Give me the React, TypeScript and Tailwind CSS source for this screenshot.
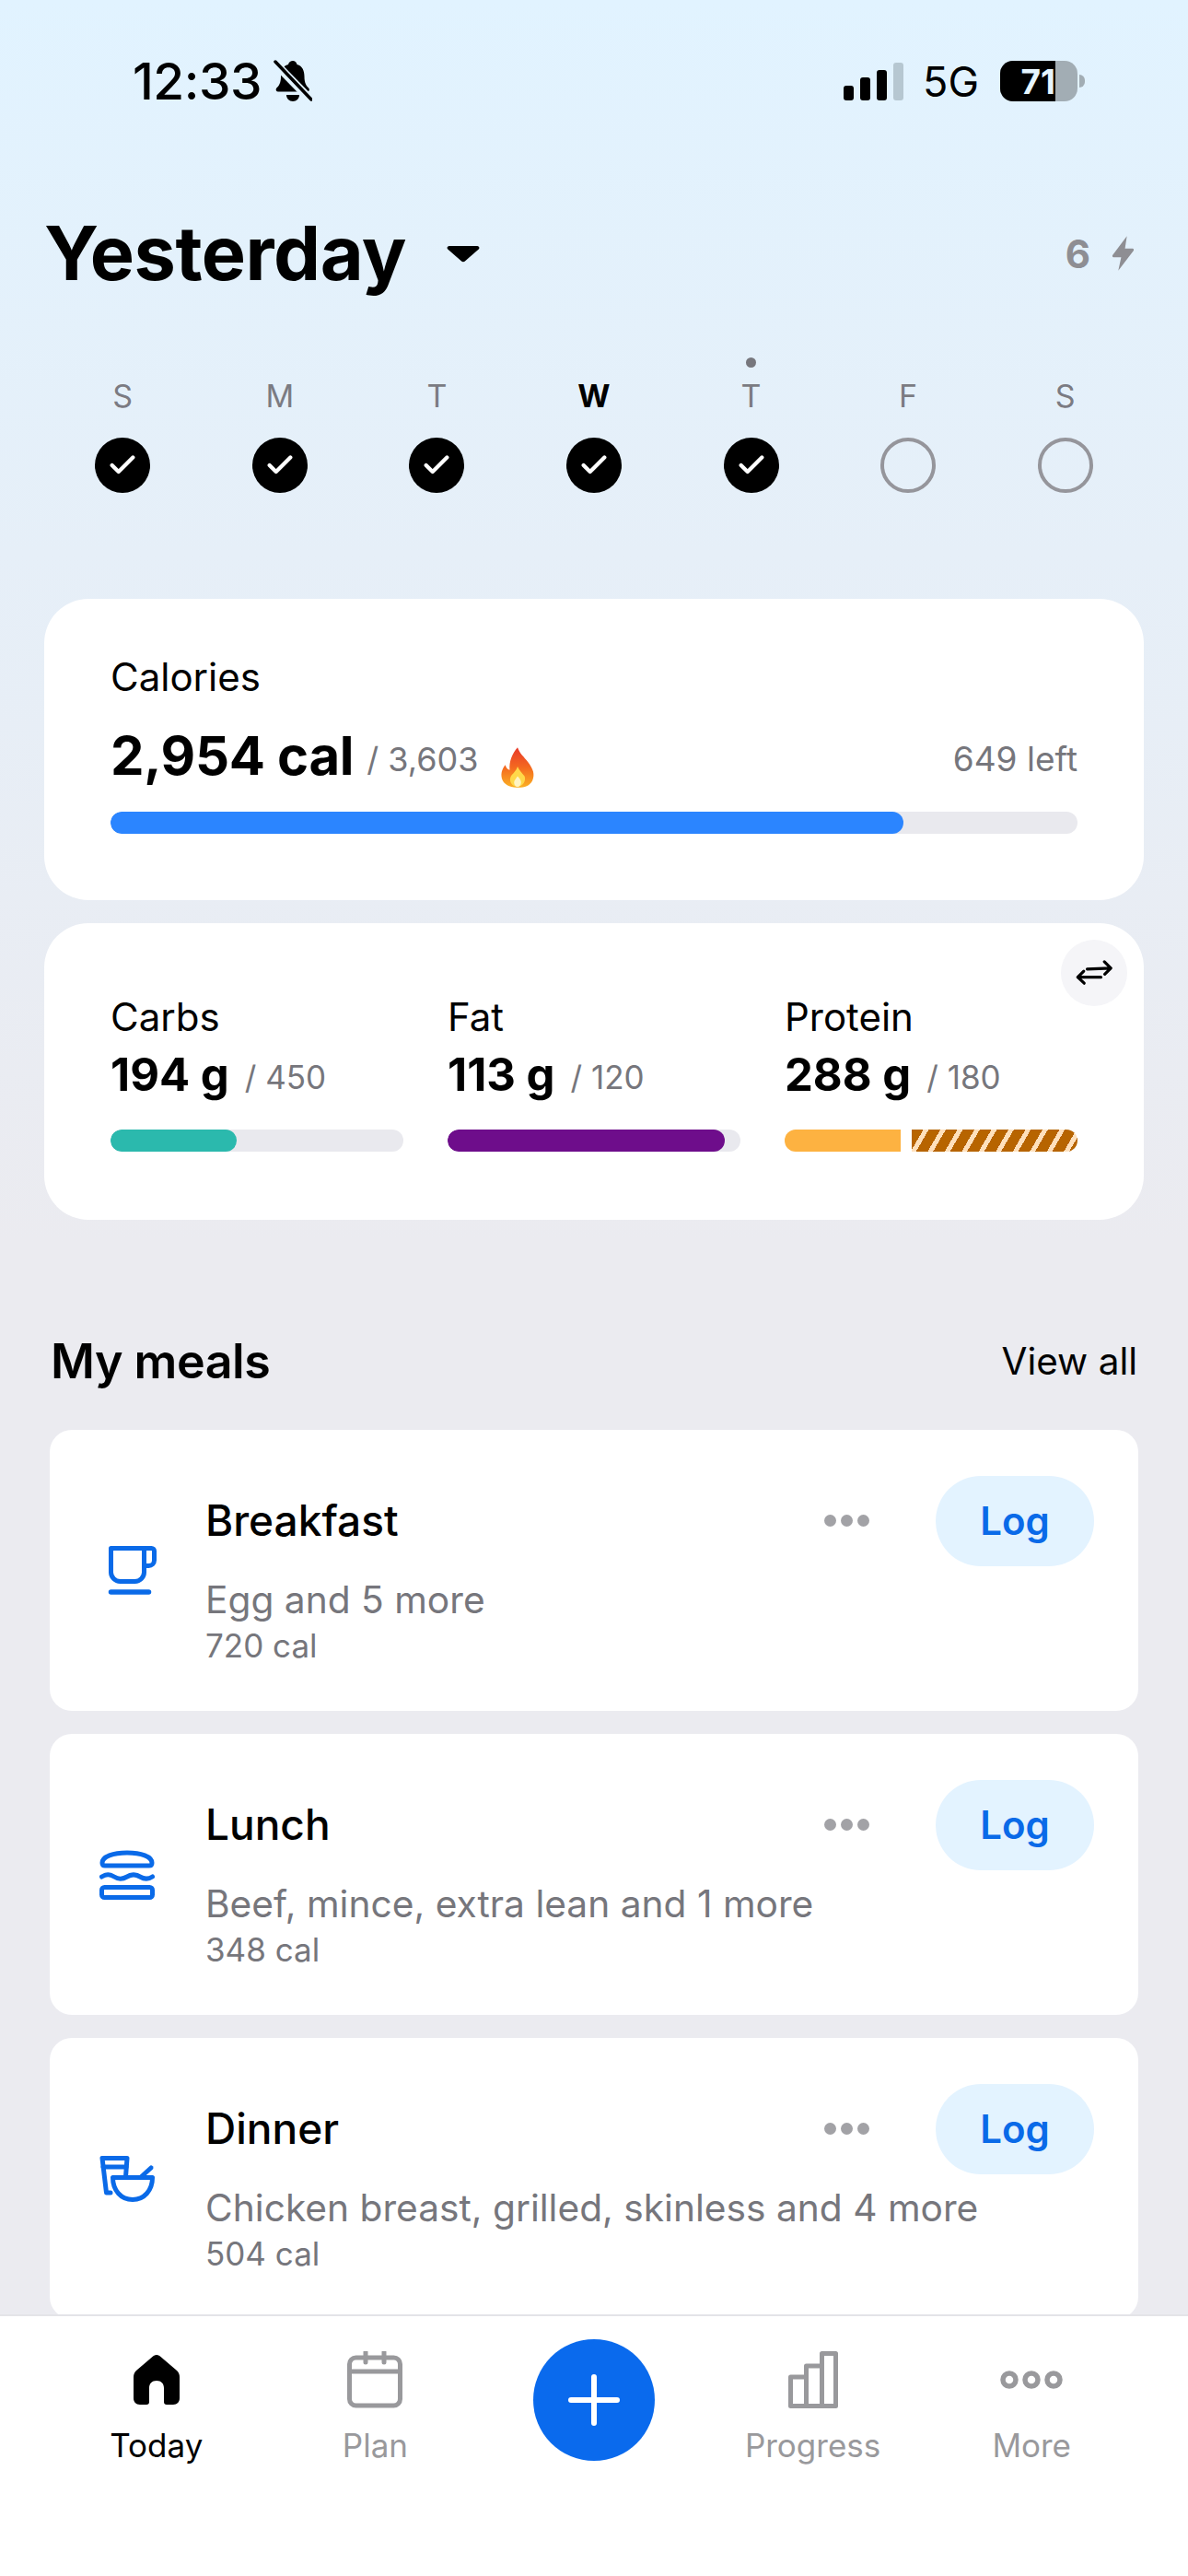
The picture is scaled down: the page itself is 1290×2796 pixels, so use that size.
import React from "react";
import { Check } from "lucide-react";

const days = ["S", "M", "T", "W", "T", "F", "S"];

const CupIcon = () => (
  <svg viewBox="0 0 60 60" className="w-[60px] h-[60px] overflow-visible" fill="none" stroke="#0a6ae8" strokeWidth="5" strokeLinecap="round" strokeLinejoin="round">
    <path d="M12.5 8.5a3 3 0 0 1 3-3h41a3 3 0 0 1 3 3v10a6 6 0 0 1-6 6h-4.500" />
    <path d="M12.500 5.500h36v26a10 10 0 0 1-10 10h-16a10 10 0 0 1-10-10z" />
    <path d="M12.500 53h41" strokeWidth="5.500" />
  </svg>
);

const BurgerIcon = () => (
  <svg viewBox="0 0 60 60" className="w-[60px] h-[60px]" fill="none" stroke="#0a6ae8" strokeWidth="5" strokeLinecap="round" strokeLinejoin="round">
    <path d="M3 17c0-7 12-11 27-11s27 4 27 11c0 2-1 3-3 3H6c-2 0-3-1-3-3z" />
    <path d="M2.500 32c4.500-3 9-3 13.500 0s9 3 14 0 9-3 14 0 9 3 13.500 0" />
    <rect x="2.500" y="43.500" width="55" height="11" rx="3" />
  </svg>
);

const BowlIcon = () => (
  <svg viewBox="0 0 60 60" className="w-[60px] h-[60px]" fill="none" stroke="#0a6ae8" strokeWidth="5" strokeLinecap="round" strokeLinejoin="round">
    <path d="M12 45H7.500L3 7.500h27l-1.500 20" />
    <path d="M4 17h25" />
    <path d="M14.500 28.500h43c0 14-9 24-21.500 24s-21.500-10-21.500-24z" />
    <path d="M56 18L45 28" />
  </svg>
);

const meals = [
  { name: "Breakfast", items: "Egg and 5 more", cal: "720 cal", icon: <CupIcon /> },
  { name: "Lunch", items: "Beef, mince, extra lean and 1 more", cal: "348 cal", icon: <BurgerIcon /> },
  { name: "Dinner", items: "Chicken breast, grilled, skinless and 4 more", cal: "504 cal", icon: <BowlIcon /> },
];

const StatusBar = () => (
  <div className="flex items-center justify-between h-[48px] pl-[144px] pr-[112px] text-black">
    <div className="flex items-center gap-[13px]">
      <span className="text-[55px] leading-none font-medium tracking-[-0.5px]">12:33</span>
      <svg viewBox="0 0 42 46" className="w-[42px] h-[46px]">
        <path d="M21 1c2 0 4 1.500 4.500 4 6 1.500 8 7 8 13 0 7 2 10 5 13 1 1.500 0 3.500-2 3.500H5c-2 0-3-2-2-3.500 3-3 5-6 5-13 0-6 2-11.500 8-13C16.500 2.500 19 1 21 1z" fill="#000" />
        <path d="M14 38h14c0 4-3 7-7 7s-7-3-7-7z" fill="#000" />
        <path d="M1 3l39 40" stroke="#e1f3ff" strokeWidth="9" />
        <path d="M2 2l39 41" stroke="#000" strokeWidth="3.500" strokeLinecap="round" />
      </svg>
    </div>
    <div className="flex items-center">
      <div className="flex items-end gap-[7px] mr-[21px]">
        <div className="w-[11px] h-[16px] rounded-[3px] bg-black" />
        <div className="w-[11px] h-[25px] rounded-[3px] bg-black" />
        <div className="w-[11px] h-[33px] rounded-[3px] bg-black" />
        <div className="w-[11px] h-[41px] rounded-[3px] bg-[#b6c7d1]" />
      </div>
      <span className="text-[45px] leading-none font-normal mr-[23px]">5G</span>
      <div className="flex items-center gap-[2px]">
        <div className="relative w-[84px] h-[44px] rounded-[14px] bg-[#a2adb4] overflow-hidden">
          <div className="w-[60px] h-full bg-black flex items-center justify-end overflow-hidden">
            <span className="text-[37px] leading-none font-bold text-[#e6f5ff]">71</span>
          </div>
        </div>
        <div className="w-[6px] h-[14px] rounded-r-full bg-[#a2adb4]" />
      </div>
    </div>
  </div>
);

const Week = () => (
  <div className="grid grid-cols-7 mt-[89px]">
    {days.map((d, i) => (
      <div key={i} className="relative flex flex-col items-center">
        {i === 4 && <div className="absolute top-[-21px] w-[11px] h-[11px] rounded-full bg-[#77777d]" />}
        <span className={`text-[34px] leading-[42px] ${i === 3 ? "font-bold text-black" : "text-[#7b7b82]"}`}>{d}</span>
        {i < 5 ? (
          <div className="mt-[24px] w-[60px] h-[60px] rounded-full bg-black flex items-center justify-center">
            <Check className="w-[34px] h-[34px] text-white" strokeWidth={3} />
          </div>
        ) : (
          <div className="mt-[24px] w-[60px] h-[60px] rounded-full border-[4px] border-[#95959b]" />
        )}
      </div>
    ))}
  </div>
);

const CaloriesCard = () => (
  <div className="h-[327px] rounded-[48px] bg-white px-[72px] pt-[60px]">
    <div className="text-[42px] leading-[50px] text-black">Calories</div>
    <div className="flex items-end mt-[22px] h-[76px]">
      <span className="text-[58px] leading-[76px] font-bold tracking-[-0.3px] text-black">2,954 cal</span>
      <span className="text-[36px] leading-[68px] text-[#76767c] ml-[14px]">/ 3,603</span>
      <svg viewBox="0 0 40 46" className="w-[38px] h-[46px] ml-[23px] mb-[2px]">
        <defs>
          <linearGradient id="flame" x1="0" y1="0" x2="0" y2="1">
            <stop offset="0" stopColor="#e8392a" />
            <stop offset="0.5" stopColor="#f4691f" />
            <stop offset="1" stopColor="#fbb124" />
          </linearGradient>
        </defs>
        <path d="M20 0c3 8 7 10 12 17 6 8 8 14 5 21-3 6-9 8-16 8S6 44 3 38c-3-7-1-13 3-18 1 3 2 5 5 6-1-10 3-19 9-26z" fill="url(#flame)" />
        <path d="M20 22c2 5 5 7 8 11 2 5-2 12-8 12s-10-6-8-11c2-4 6-6 8-12z" fill="#ffd84a" />
        <path d="M20 33c3 3 4 5 4 7 0 3-2 5-4 5s-4-2-4-5c0-2 2-4 4-7z" fill="#fff4c4" />
      </svg>
      <span className="ml-auto text-[37px] leading-[68px] text-[#76767c]">649 left</span>
    </div>
    <div className="mt-[23px] h-[24px] rounded-full bg-[#e9e9ee] overflow-hidden">
      <div className="w-[861px] h-full rounded-full bg-[#2b85ff]" />
    </div>
  </div>
);

const Macro = ({ label, value, goal, children }: any) => (
  <div className="w-[318px]">
    <div className="text-[42px] leading-[50px] text-black">{label}</div>
    <div className="flex items-end mt-[8px] h-[60px]">
      <span className="text-[49px] leading-[60px] font-bold text-black">{value}</span>
      <span className="text-[35px] leading-[56px] text-[#76767c] ml-[17px]">/ {goal}</span>
    </div>
    <div className="mt-[29px] h-[24px]">{children}</div>
  </div>
);

const MacrosCard = () => (
  <div className="relative h-[322px] rounded-[48px] bg-white px-[72px] pt-[77px] flex gap-[48px]">
    <button className="absolute top-[18px] right-[18px] w-[72px] h-[72px] rounded-full bg-[#f5f5f8] flex items-center justify-center">
      <svg viewBox="0 0 44 30" className="w-[42px] h-[28px]" fill="none" stroke="#000" strokeWidth="3.400" strokeLinecap="round" strokeLinejoin="round">
        <path d="M14 10.500l27-1M34 2l7.500 7.500-7 7" />
        <path d="M30 20H3M10 13l-7 7 7.500 7" />
      </svg>
    </button>
    <Macro label="Carbs" value="194 g" goal="450">
      <div className="h-full rounded-full bg-[#e9e9ee] overflow-hidden">
        <div className="w-[137px] h-full rounded-full bg-[#2bb9ad]" />
      </div>
    </Macro>
    <Macro label="Fat" value="113 g" goal="120">
      <div className="h-full rounded-full bg-[#e9e9ee] overflow-hidden">
        <div className="w-[301px] h-full rounded-full bg-[#6e0d8b]" />
      </div>
    </Macro>
    <Macro label="Protein" value="288 g" goal="180">
      <div className="flex h-full gap-[12px]">
        <div className="w-[126px] rounded-l-full bg-[#fdb241]" />
        <div className="flex-1 rounded-r-full bg-[repeating-linear-gradient(120deg,#b76400_0px,#b76400_11px,#ffe0bc_11px,#ffe0bc_16px)]" />
      </div>
    </Macro>
  </div>
);

const MealCard = ({ meal }: any) => (
  <div className="flex items-center h-[305px] shrink-0 rounded-[24px] bg-white pl-[54px] pr-[48px]">
    <div className="w-[60px] shrink-0">{meal.icon}</div>
    <div className="flex-1 ml-[55px]">
      <div className="flex items-center h-[98px]">
        <span className="text-[46px] font-medium text-black">{meal.name}</span>
        <div className="ml-auto flex gap-[5px]">
          <div className="w-[13px] h-[13px] rounded-full bg-[#a2a2a6]" />
          <div className="w-[13px] h-[13px] rounded-full bg-[#a2a2a6]" />
          <div className="w-[13px] h-[13px] rounded-full bg-[#a2a2a6]" />
        </div>
        <button className="ml-[72px] w-[172px] h-[98px] rounded-full bg-[#e3f3ff] text-[42px] font-semibold text-[#0a6ae8]">Log</button>
      </div>
      <div className="mt-[11px] text-[40.700px] leading-[52px] text-[#76767c]">{meal.items}</div>
      <div className="mt-[1px] text-[35px] leading-[44px] text-[#76767c]">{meal.cal}</div>
    </div>
  </div>
);

const NavItem = ({ label, active, children }: any) => (
  <div className="flex flex-col items-center">
    <div className="w-[80px] h-[64px] flex items-center justify-center">{children}</div>
    <span className={`mt-[17px] text-[35px] leading-[44px] ${active ? "text-black" : "text-[#99999c]"}`}>{label}</span>
  </div>
);

const BottomNav = () => (
  <div className="h-[284px] shrink-0 bg-white border-t-[2px] border-[#e4e4e8] pl-[51px] pr-[51px] pt-[37px] grid grid-cols-5 items-start">
    <NavItem label="Today" active>
      <svg viewBox="0 0 50 54" className="w-[50px] h-[54px]">
        <path fillRule="evenodd" d="M25 0c2 0 3.500 1 5 2.500L47 17c2 2 3 4 3 7v23c0 4-2.500 7-7 7h-7c-2 0-3-1-3-3V36c0-5-3-8-8-8s-8 3-8 8v15c0 2-1 3-3 3H7c-4.500 0-7-3-7-7V24c0-3 1-5 3-7L20 2.500C21.500 1 23 0 25 0z" fill="#000" />
      </svg>
    </NavItem>
    <NavItem label="Plan">
      <svg viewBox="0 0 60 62" className="w-[60px] h-[62px]" fill="none" stroke="#99999c" strokeWidth="5" strokeLinecap="round">
        <rect x="2.500" y="7" width="55" height="52" rx="7" />
        <path d="M3 22h54" />
        <path d="M20 1v11M40 1v11" />
      </svg>
    </NavItem>
    <div className="flex justify-center">
      <button className="w-[132px] h-[132px] mt-[-12px] rounded-full bg-[#0a6aed] flex items-center justify-center">
        <svg viewBox="0 0 56 56" className="w-[56px] h-[56px]" stroke="#fff" strokeWidth="6" strokeLinecap="round">
          <path d="M28 3v50M3 28h50" />
        </svg>
      </button>
    </div>
    <NavItem label="Progress">
      <svg viewBox="0 0 54 62" className="w-[54px] h-[62px]" fill="none" stroke="#99999c" strokeWidth="5" strokeLinejoin="round">
        <path d="M2.500 59.500V28h17v31.500zM19.500 59.500V16h17v43.500zM36.500 59.500V2.500h15v57z" />
      </svg>
    </NavItem>
    <NavItem label="More">
      <svg viewBox="0 0 68 22" className="w-[68px] h-[22px]" fill="none" stroke="#99999c" strokeWidth="5.500">
        <circle cx="10" cy="11" r="7" />
        <circle cx="34" cy="11" r="7" />
        <circle cx="58" cy="11" r="7" />
      </svg>
    </NavItem>
  </div>
);

export default function App() {
  return (
    <div className="w-[1290px] h-[2796px] flex flex-col overflow-hidden font-['Inter',sans-serif]">
      <div className="flex-1 min-h-0 overflow-hidden bg-[linear-gradient(180deg,#e1f3ff_0px,#e6eff8_600px,#ebebf0_1350px)] pt-[64px]">
        <StatusBar />
        <div className="px-[48px]">
          <div className="flex items-center mt-[118px] h-[90px]">
            <h1 className="text-[81px] leading-[90px] font-bold tracking-[-0.5px] text-black">Yesterday</h1>
            <svg viewBox="0 0 38 20" className="w-[36px] h-[19px] ml-[44px]">
              <path d="M3 1h32c2 0 3 2 2 3.500L21 18.500c-1 1-3 1-4 0L1 4.500C0 3 1 1 3 1z" fill="#000" />
            </svg>
            <span className="ml-auto text-[42px] font-bold text-[#8e8e93]">6</span>
            <svg viewBox="0 0 26 36" className="w-[27px] h-[38px] ml-[22px] mr-[9px]">
              <path d="M17 0L2 20c-.5 1 0 2 1 2h8L8 36l16-21c.5-1 0-2-1-2h-8z" fill="#8e8e93" />
            </svg>
          </div>
          <Week />
          <div className="mt-[115px] flex flex-col gap-[25px]">
            <CaloriesCard />
            <MacrosCard />
          </div>
        </div>
        <div className="flex items-center justify-between mt-[121px] pl-[55px] pr-[55px] h-[66px]">
          <span className="text-[52px] font-semibold tracking-[-0.5px] text-black">My meals</span>
          <span className="text-[40.500px] text-black">View all</span>
        </div>
        <div className="mt-[41px] mx-[54px] flex flex-col gap-[25px]">
          {meals.map((m) => (
            <MealCard key={m.name} meal={m} />
          ))}
        </div>
      </div>
      <BottomNav />
    </div>
  );
}
